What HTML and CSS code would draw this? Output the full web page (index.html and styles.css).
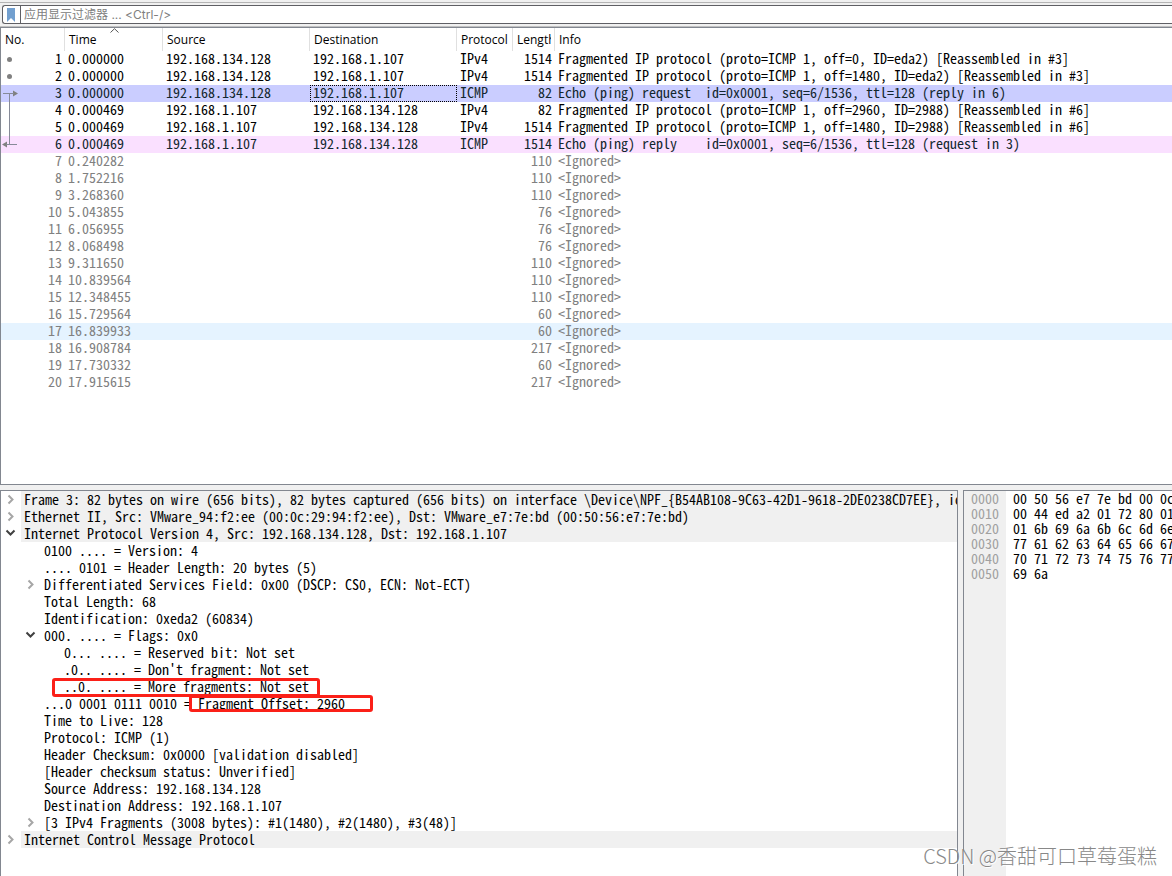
FILE: index.html
```html
<!DOCTYPE html>
<html lang="zh-CN">
<head>
<meta charset="utf-8">
<title>Wireshark</title>
<link rel="stylesheet" href="styles.css">
</head>
<body>
<div class="filter-bar">
  <div class="filter-box">
    <button class="bookmark" type="button" aria-label="书签"><svg width="10" height="14" viewBox="0 0 10 14"><path d="M1 0H9V14L5 10L1 14Z" fill="#729fcf"/></svg></button>
    <input class="filter-input" type="text" aria-label="应用显示过滤器" placeholder="应用显示过滤器 ... &lt;Ctrl-/&gt;">
  </div>
</div>
<main class="panes">
  <section class="packet-list">
    <table class="packets">
      <colgroup><col class="c-no"><col class="c-time"><col class="c-addr"><col class="c-addr"><col class="c-proto"><col class="c-len"><col></colgroup>
      <thead>
        <tr><th>No.</th><th class="sorted">Time<svg class="sort" width="9" height="5" viewBox="0 0 9 5"><path d="M.5 4.500L4.500 .7L8.500 4.500" fill="none" stroke="#555"/></svg></th><th>Source</th><th>Destination</th><th>Protocol</th><th><div class="clip">Length</div></th><th>Info</th></tr>
      </thead>
      <tbody>
        <tr><td>1</td><td>0.000000</td><td>192.168.134.128</td><td>192.168.1.107</td><td>IPv4</td><td>1514</td><td>Fragmented IP protocol (proto=ICMP 1, off=0, ID=eda2) [Reassembled in #3]</td></tr>
        <tr><td>2</td><td>0.000000</td><td>192.168.134.128</td><td>192.168.1.107</td><td>IPv4</td><td>1514</td><td>Fragmented IP protocol (proto=ICMP 1, off=1480, ID=eda2) [Reassembled in #3]</td></tr>
        <tr class="selected"><td>3</td><td>0.000000</td><td>192.168.134.128</td><td class="current">192.168.1.107</td><td>ICMP</td><td>82</td><td>Echo (ping) request  id=0x0001, seq=6/1536, ttl=128 (reply in 6)</td></tr>
        <tr><td>4</td><td>0.000469</td><td>192.168.1.107</td><td>192.168.134.128</td><td>IPv4</td><td>82</td><td>Fragmented IP protocol (proto=ICMP 1, off=2960, ID=2988) [Reassembled in #6]</td></tr>
        <tr><td>5</td><td>0.000469</td><td>192.168.1.107</td><td>192.168.134.128</td><td>IPv4</td><td>1514</td><td>Fragmented IP protocol (proto=ICMP 1, off=1480, ID=2988) [Reassembled in #6]</td></tr>
        <tr class="icmp"><td>6</td><td>0.000469</td><td>192.168.1.107</td><td>192.168.134.128</td><td>ICMP</td><td>1514</td><td>Echo (ping) reply    id=0x0001, seq=6/1536, ttl=128 (request in 3)</td></tr>
      </tbody>
      <tbody class="ignored">
        <tr><td>7</td><td>0.240282</td><td></td><td></td><td></td><td>110</td><td>&lt;Ignored&gt;</td></tr>
        <tr><td>8</td><td>1.752216</td><td></td><td></td><td></td><td>110</td><td>&lt;Ignored&gt;</td></tr>
        <tr><td>9</td><td>3.268360</td><td></td><td></td><td></td><td>110</td><td>&lt;Ignored&gt;</td></tr>
        <tr><td>10</td><td>5.043855</td><td></td><td></td><td></td><td>76</td><td>&lt;Ignored&gt;</td></tr>
        <tr><td>11</td><td>6.056955</td><td></td><td></td><td></td><td>76</td><td>&lt;Ignored&gt;</td></tr>
        <tr><td>12</td><td>8.068498</td><td></td><td></td><td></td><td>76</td><td>&lt;Ignored&gt;</td></tr>
        <tr><td>13</td><td>9.311650</td><td></td><td></td><td></td><td>110</td><td>&lt;Ignored&gt;</td></tr>
        <tr><td>14</td><td>10.839564</td><td></td><td></td><td></td><td>110</td><td>&lt;Ignored&gt;</td></tr>
        <tr><td>15</td><td>12.348455</td><td></td><td></td><td></td><td>110</td><td>&lt;Ignored&gt;</td></tr>
        <tr><td>16</td><td>15.729564</td><td></td><td></td><td></td><td>60</td><td>&lt;Ignored&gt;</td></tr>
        <tr class="hover"><td>17</td><td>16.839933</td><td></td><td></td><td></td><td>60</td><td>&lt;Ignored&gt;</td></tr>
        <tr><td>18</td><td>16.908784</td><td></td><td></td><td></td><td>217</td><td>&lt;Ignored&gt;</td></tr>
        <tr><td>19</td><td>17.730332</td><td></td><td></td><td></td><td>60</td><td>&lt;Ignored&gt;</td></tr>
        <tr><td>20</td><td>17.915615</td><td></td><td></td><td></td><td>217</td><td>&lt;Ignored&gt;</td></tr>
      </tbody>
    </table>
    <svg class="relations" width="20" height="102" viewBox="0 0 20 102">
      <g fill="#808080"><circle cx="8.500" cy="8.500" r="2.500"/><circle cx="8.500" cy="25.500" r="2.500"/><path d="M12 39.500L17 42.500L12 45.500ZM6 90.500L1 93.500L6 96.500Z"/></g>
      <path d="M2 42.500H13M8.500 42.500V93.500M5 93.500H16" fill="none" stroke="#868a98"/>
    </svg>
  </section>
  <div class="lower">
    <section class="details">
      <div class="row top"><svg class="chev" viewBox="0 0 20 17"><path class="closed" d="M7.500 4.500L11.500 8.500L7.500 12.500"/></svg><span>Frame 3: 82 bytes on wire (656 bits), 82 bytes captured (656 bits) on interface \Device\NPF_{B54AB108-9C63-42D1-9618-2DE0238CD7EE}, id 0</span></div>
      <div class="row top"><svg class="chev" viewBox="0 0 20 17"><path class="closed" d="M7.500 4.500L11.500 8.500L7.500 12.500"/></svg><span>Ethernet II, Src: VMware_94:f2:ee (00:0c:29:94:f2:ee), Dst: VMware_e7:7e:bd (00:50:56:e7:7e:bd)</span></div>
      <div class="row top"><svg class="chev" viewBox="0 0 20 17"><path class="open" d="M5.500 5.500L9.500 9.500L13.500 5.500"/></svg><span>Internet Protocol Version 4, Src: 192.168.134.128, Dst: 192.168.1.107</span></div>
      <div class="branch">
        <div class="row"><i class="chev"></i><span>0100 .... = Version: 4</span></div>
        <div class="row"><i class="chev"></i><span>.... 0101 = Header Length: 20 bytes (5)</span></div>
        <div class="row"><svg class="chev" viewBox="0 0 20 17"><path class="closed" d="M7.500 4.500L11.500 8.500L7.500 12.500"/></svg><span>Differentiated Services Field: 0x00 (DSCP: CS0, ECN: Not-ECT)</span></div>
        <div class="row"><i class="chev"></i><span>Total Length: 68</span></div>
        <div class="row"><i class="chev"></i><span>Identification: 0xeda2 (60834)</span></div>
        <div class="row"><svg class="chev" viewBox="0 0 20 17"><path class="open" d="M5.500 5.500L9.500 9.500L13.500 5.500"/></svg><span>000. .... = Flags: 0x0</span></div>
        <div class="branch">
          <div class="row"><i class="chev"></i><span>0... .... = Reserved bit: Not set</span></div>
          <div class="row"><i class="chev"></i><span>.0.. .... = Don't fragment: Not set</span></div>
          <div class="row"><i class="chev"></i><span class="marked more">..0. .... = More fragments: Not set</span></div>
        </div>
        <div class="row"><i class="chev"></i><span>...0 0001 0111 0010 = <span class="marked offset">Fragment Offset: 2960</span></span></div>
        <div class="row"><i class="chev"></i><span>Time to Live: 128</span></div>
        <div class="row"><i class="chev"></i><span>Protocol: ICMP (1)</span></div>
        <div class="row"><i class="chev"></i><span>Header Checksum: 0x0000 [validation disabled]</span></div>
        <div class="row"><i class="chev"></i><span>[Header checksum status: Unverified]</span></div>
        <div class="row"><i class="chev"></i><span>Source Address: 192.168.134.128</span></div>
        <div class="row"><i class="chev"></i><span>Destination Address: 192.168.1.107</span></div>
        <div class="row"><svg class="chev" viewBox="0 0 20 17"><path class="closed" d="M7.500 4.500L11.500 8.500L7.500 12.500"/></svg><span>[3 IPv4 Fragments (3008 bytes): #1(1480), #2(1480), #3(48)]</span></div>
      </div>
      <div class="row top"><svg class="chev" viewBox="0 0 20 17"><path class="closed" d="M7.500 4.500L11.500 8.500L7.500 12.500"/></svg><span>Internet Control Message Protocol</span></div>
    </section>
    <section class="bytes">
      <pre class="offsets">0000
0010
0020
0030
0040
0050</pre>
      <pre class="hex">00 50 56 e7 7e bd 00 0c
00 44 ed a2 01 72 80 01
01 6b 69 6a 6b 6c 6d 6e
77 61 62 63 64 65 66 67
70 71 72 73 74 75 76 77
69 6a</pre>
    </section>
  </div>
</main>
<div class="watermark">CSDN @香甜可口草莓蛋糕</div>
</body>
</html>
```
FILE: styles.css
```css
*, *::after { box-sizing: border-box; }
body {
  margin: 0;
  height: 100vh;
  display: flex;
  flex-direction: column;
  overflow: hidden;
  background: #f0f0f0;
  color: #000;
  font: 14px/17px "Noto Sans Mono CJK SC", "Liberation Mono", monospace;
}
.filter-bar {
  margin-top: 2px;
  padding: 2px 0 2px 2px;
  border-top: 1px solid #b4b4b4;
  border-bottom: 1px solid #c0c0c0;
}
.filter-box {
  display: flex;
  height: 19px;
  background: #fff;
  border: 1px solid #5f5f64;
  border-right: 0;
  border-radius: 3px 0 0 3px;
}
.bookmark {
  width: 18px;
  padding: 0 0 0 3px;
  border: 0;
  border-right: 1px solid #5f5f64;
  background: none;
  display: flex;
  align-items: center;
}
.filter-input {
  flex: 1;
  min-width: 0;
  border: 0;
  outline: 0;
  padding: 0 3px;
  background: none;
  font: 12px/17px Inter, "Noto Sans CJK SC", sans-serif;
}
.filter-input::placeholder { color: #808080; opacity: 1; }
.panes {
  flex: 1;
  min-height: 0;
  display: grid;
  grid-template-rows: 458fr 386fr;
  gap: 5px;
}
.packet-list {
  position: relative;
  overflow: hidden;
  background: #fff;
  border: 1px solid #828790;
  border-right: 0;
}
.packets {
  width: 100%;
  table-layout: fixed;
  border-collapse: separate;
  border-spacing: 0;
}
.c-no { width: 64px; }
.c-time { width: 98px; }
.c-addr { width: 147px; }
.c-proto { width: 56px; }
.c-len { width: 42px; }
.packets th {
  position: relative;
  height: 23px;
  padding: 1px 4px 0;
  border-right: 1px solid #e0e0e0;
  text-align: left;
  white-space: nowrap;
  font: 12px/20px "Open Sans", "Noto Sans", sans-serif;
}
.packets th:last-child { border-right: 0; }
.clip { width: 34px; overflow: hidden; }
.sort { position: absolute; left: 45px; top: 0; }
.packets td {
  height: 17px;
  padding: 0 3px;
  line-height: 15px;
  vertical-align: top;
  white-space: pre;
}
.packets td:nth-child(1), .packets td:nth-child(6) { text-align: right; }
.ignored { color: #808080; }
.selected { background: #cacdff; color: #12272e; }
.icmp { background: #fae0ff; color: #12272e; }
.hover { background: #e5f3ff; }
.current { outline: 1px dotted #000; outline-offset: -1px; }
.relations { position: absolute; left: 0; top: 23px; }
.lower {
  min-height: 0;
  display: grid;
  grid-template-columns: minmax(0, 958fr) minmax(0, 209fr);
  gap: 5px;
}
.details {
  overflow: hidden;
  background: #fff;
  border: 1px solid #828790;
  border-bottom: 0;
}
.row { display: flex; height: 17px; white-space: pre; }
.row > span { flex: 1; min-width: 0; padding-left: 3px; }
.top > span { background: #f0f0f0; }
.chev { flex: none; width: 20px; height: 17px; }
.chev path { fill: none; stroke-width: 2; }
.closed { stroke: #a6a6a6; }
.open { stroke: #404040; }
.branch { padding-left: 20px; }
.marked { position: relative; }
.marked::after {
  content: "";
  position: absolute;
  border: 3px solid #fb2018;
  border-radius: 3px;
}
.more::after { left: -9px; top: 0; width: 268px; height: 19px; }
.offset::after { left: -9px; top: 2px; width: 184px; height: 17px; }
.bytes {
  display: flex;
  overflow: hidden;
  background: #fff;
  border: 1px solid #828790;
  border-right: 0;
  border-bottom: 0;
}
.bytes pre { margin: 0; font: inherit; line-height: 15px; }
.offsets { padding: 0 7px; background: #f0f0f0; color: #a0a0a0; }
.hex { padding-left: 7px; }
.watermark {
  position: absolute;
  right: 15px;
  bottom: 6px;
  color: #888;
  font: 300 20px/28px "Noto Sans CJK SC", sans-serif;
  text-shadow: 1px 1px 0 #fff;
}
```
